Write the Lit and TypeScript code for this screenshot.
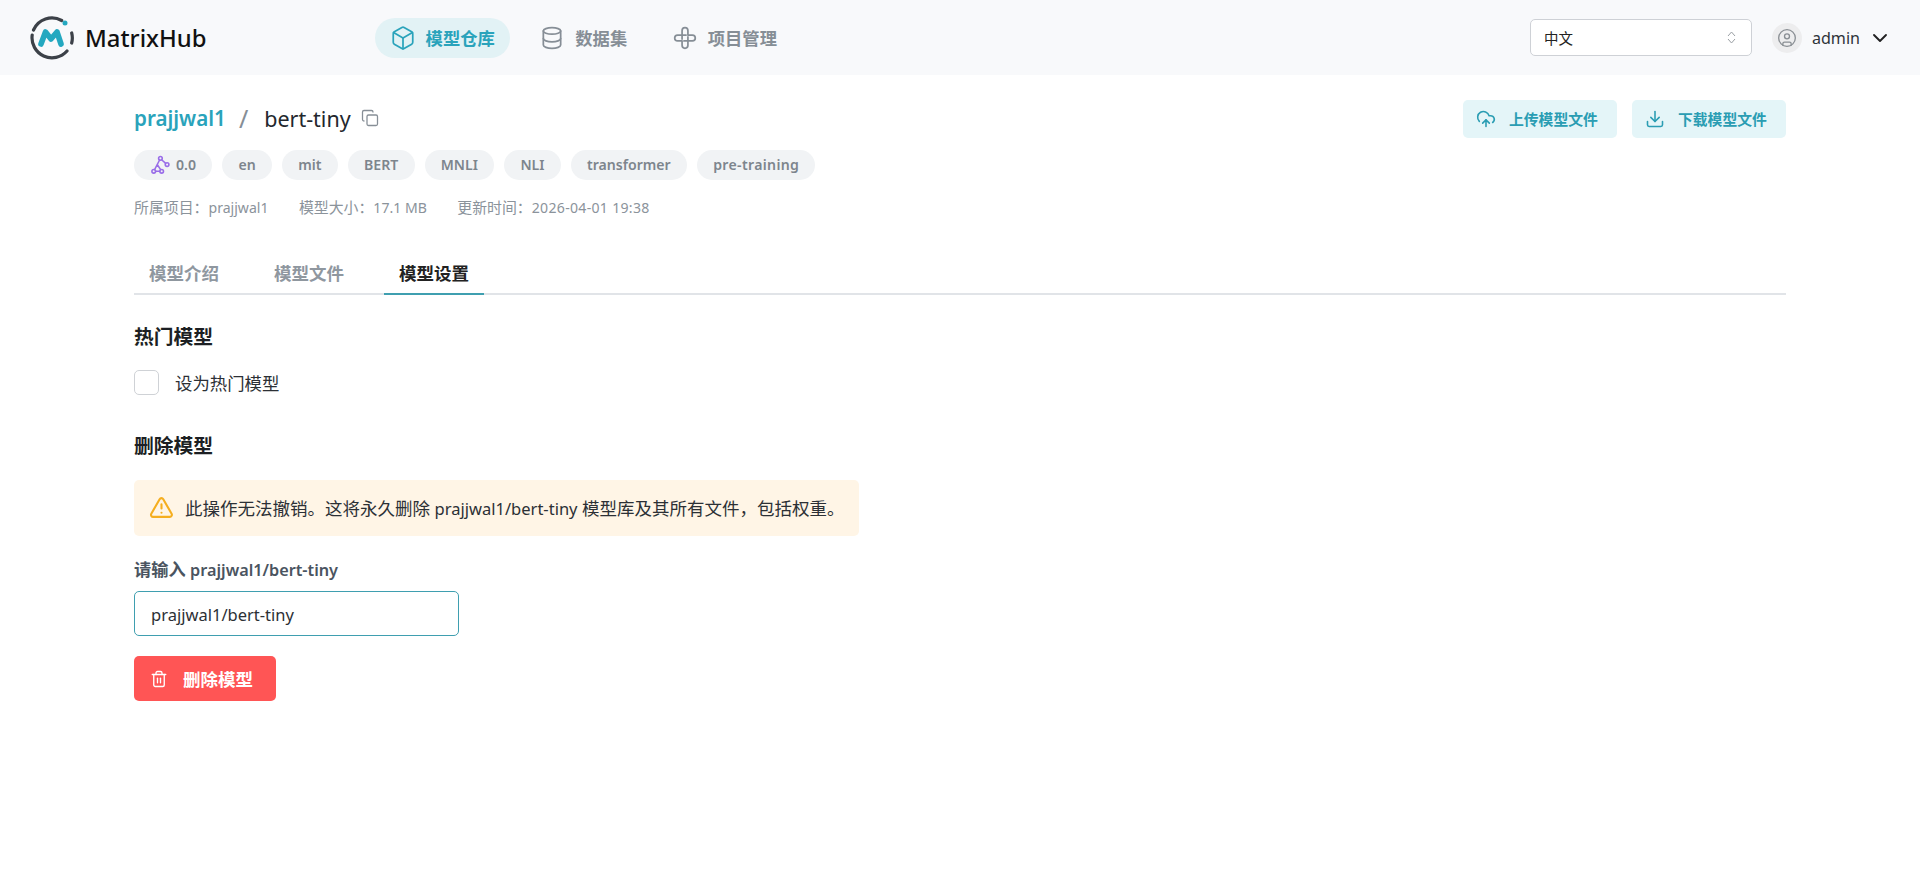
import { LitElement, html, css, svg } from "lit";
import { customElement } from "lit/decorators.js";

const icon = (size: number, body: unknown, sw = 2) => html`<svg width=${size} height=${size} viewBox="0 0 24 24" fill="none" stroke="currentColor" stroke-width=${sw} stroke-linecap="round" stroke-linejoin="round">${body}</svg>`;

const cube = svg`<path d="M21 16V8a2 2 0 0 0-1-1.730l-7-4a2 2 0 0 0-2 0l-7 4A2 2 0 0 0 3 8v8a2 2 0 0 0 1 1.730l7 4a2 2 0 0 0 2 0l7-4A2 2 0 0 0 21 16z"/><path d="M3.300 7 12 12l8.700-5"/><path d="M12 22V12"/>`;
const db = svg`<ellipse cx="12" cy="5.500" rx="8" ry="3"/><path d="M4 5.500v13c0 1.700 3.600 3 8 3s8-1.300 8-3v-13"/><path d="M4 12.500c0 1.700 3.600 3 8 3s8-1.300 8-3"/>`;
const project = svg`<path d="M9.300 13V5.200a2.700 2.700 0 0 1 5.400 0V9.300H18.800a2.700 2.700 0 0 1 0 5.400H11"/><path d="M14.700 11V18.800a2.700 2.700 0 0 1-5.400 0V14.700H5.200a2.700 2.700 0 0 1 0-5.400H13"/>`;
const upload = svg`<path d="M12 13v8"/><path d="M4 14.900A7 7 0 1 1 15.700 8h1.800a4.500 4.500 0 0 1 2.500 8.200"/><path d="m8 17 4-4 4 4"/>`;
const download = svg`<path d="M21 15v4a2 2 0 0 1-2 2H5a2 2 0 0 1-2-2v-4"/><path d="m7 10 5 5 5-5"/><path d="M12 15V3"/>`;
const copy = svg`<rect x="8" y="8" width="14" height="14" rx="2"/><path d="M4 16c-1.100 0-2-.9-2-2V4c0-1.100.9-2 2-2h10c1.100 0 2 .9 2 2"/>`;
const warn = svg`<path d="m21.700 18-8-14a2 2 0 0 0-3.500 0l-8 14A2 2 0 0 0 4 21h16a2 2 0 0 0 1.700-3"/><path d="M12 9v4"/><path d="M12 17h.01"/>`;
const trash = svg`<path d="M3 6h18"/><path d="M19 6v14a2 2 0 0 1-2 2H7a2 2 0 0 1-2-2V6"/><path d="M8 6V4a2 2 0 0 1 2-2h4a2 2 0 0 1 2 2v2"/><path d="M10 11v6"/><path d="M14 11v6"/>`;
const user = svg`<circle cx="12" cy="12" r="10"/><circle cx="12" cy="10" r="3"/><path d="M7 20.700v-1.700a2 2 0 0 1 2-2h6a2 2 0 0 1 2 2v1.700"/>`;
const chev = svg`<path d="m6 9 6 6 6-6"/>`;
const graph = svg`<circle cx="12.500" cy="4" r="2.200"/><circle cx="4.500" cy="19.500" r="2.200"/><circle cx="14" cy="19.500" r="2.200"/><circle cx="20.500" cy="11.500" r="2.200"/><path d="M11.500 6 5.500 17.500M9 12l3.800 5.500M6.700 19.500h5M14.300 6l4.500 4"/>`;

@customElement("app-root")
export class AppRoot extends LitElement {
  static styles = css`
    :host {
      display: block;
      min-height: 879px;
      background: #fff;
      font-family: "Noto Sans", "Noto Sans CJK SC", sans-serif;
      color: #1f2329;
      font-size: 17.5px;
    }
    * { box-sizing: border-box; }
    svg { display: block; flex: none; }
    .la { font-size: 0.945em; }
    .date { letter-spacing: 0.3px; }
    header {
      height: 75px;
      background: #f8f9fb;
      display: flex;
      align-items: center;
      padding: 0 28px 0 30px;
    }
    .brand { display: flex; align-items: center; gap: 11px; width: 345px; }
    .brand b { font-size: 23.800px; font-weight: 500; color: #111; }
    nav { display: flex; gap: 15px; flex: 1; }
    .nav {
      height: 40px;
      display: flex;
      align-items: center;
      gap: 10px;
      padding: 0 15px 0 14.600px;
      border-radius: 20px;
      color: #868e96;
      font-weight: 700;
      font-size: 17.300px;
    }
    .nav.on { background: #e2f2f5; color: #2aa3bb; }
    .select {
      width: 222px;
      height: 37px;
      background: #fff;
      border: 1px solid #ced1d6;
      border-radius: 5px;
      display: flex;
      align-items: center;
      justify-content: space-between;
      padding: 0 15px 0 13px;
      font-size: 14.500px;
      color: #222;
    }
    .updown { display: flex; flex-direction: column; gap: 1px; color: #9a9fa4; }
    .user { display: flex; align-items: center; margin-left: 20px; color: #2f343a; font-size: 16.100px; }
    .avatar {
      width: 30px; height: 30px; border-radius: 50%;
      background: #ededee; color: #8a8f94;
      display: flex; align-items: center; justify-content: center;
      margin-right: 10px;
    }
    .user .caret { margin-left: 8px; color: #222; }
    main { padding: 25px 134px 0; }
    .top { display: flex; justify-content: space-between; align-items: flex-start; }
    .title { display: flex; align-items: center; height: 38px; font-size: 21.500px; padding-bottom: 2px; }
    .title a { color: #2aa3bb; font-weight: 600; font-size: 20.600px; }
    .title i { font-style: normal; color: #868e96; margin: 0 16px 0 13px; font-size: 25px; line-height: 1; }
    .title span { color: #23272d; }
    .title svg { color: #868e96; margin-left: 10px; }
    .acts { display: flex; gap: 15px; }
    .btn {
      height: 38px;
      width: 154px;
      background: #e4f5f8;
      color: #2a9db3;
      border-radius: 5px;
      display: flex;
      align-items: center;
      gap: 13px;
      padding: 0 0 0 13px;
      font-weight: 700;
      font-size: 14.800px;
    }
    .btn span { margin-top: -2px; }
    .tags { display: flex; gap: 10px; margin-top: 12px; }
    .tag {
      height: 30px;
      padding: 0 16.250px 1px;
      border-radius: 15px;
      background: #f1f3f5;
      color: #7d858d;
      font-size: 14.100px;
      font-weight: 600;
      display: flex;
      align-items: center;
      gap: 6px;
    }
    .tag.score { padding-left: 16px; }
    .tag.wide { letter-spacing: 0.33px; }
    .tag svg { color: #9a6ee8; }
    .meta { display: flex; gap: 30.400px; margin-top: 15px; height: 22px; align-items: center; font-size: 14.900px; color: #8b939b; }
    .tabs { display: flex; margin-top: 38px; height: 40px; border-bottom: 2px solid #e1e4e8; }
    .tab {
      width: 100px;
      margin-right: 25px;
      height: 40px;
      padding-top: 5px;
      line-height: 26px;
      text-align: center;
      font-weight: 700;
      color: #8f979f;
      border-bottom: 2px solid transparent;
    }
    .tab.on { color: #222; border-bottom-color: #3f9fb0; }
    h3 { margin: 0; font-size: 19.800px; font-weight: 700; color: #1c1f23; line-height: 28px; }
    .hot { margin-top: 28px; }
    .check { display: flex; align-items: center; gap: 16px; margin-top: 19px; color: #2c3035; font-size: 17.400px; }
    .box { width: 25px; height: 25px; background: #fff; border: 1px solid #cfd2d6; border-radius: 5px; }
    .del { margin-top: 37px; }
    .alert {
      width: 725px;
      height: 56px;
      margin-top: 20px;
      background: #fff5e6;
      border-radius: 5px;
      display: flex;
      align-items: center;
      gap: 11px;
      padding: 0 0 2px 15px;
      color: #2c3035;
    }
    .alert svg { color: #f5ae1f; margin-top: 1px; }
    label { display: block; margin-top: 21px; line-height: 26px; font-weight: 600; color: #4a5460; font-size: 17.200px; }
    .input {
      width: 325px;
      height: 45px;
      margin-top: 8px;
      border: 1.500px solid #3f9fb0;
      border-radius: 5px;
      display: flex;
      align-items: center;
      padding: 2px 0 0 16px;
      color: #2c3035;
    }
    .danger {
      width: 142px;
      height: 45px;
      margin-top: 20px;
      background: #ff5555;
      color: #fff;
      border-radius: 5px;
      display: flex;
      align-items: center;
      gap: 15px;
      padding-left: 16px;
      font-weight: 700;
    }
  `;

  render() {
    const tags = ["en", "mit", "BERT", "MNLI", "NLI", "transformer"];
    return html`
      <header>
        <div class="brand">
          <svg width="44" height="44" viewBox="0 0 44 44" fill="none">
            <g stroke="#3c4148" stroke-width="3.200" stroke-linecap="round">
              <path d="M3.500 14A20 20 0 0 1 31.700 4.500"/>
              <path d="M2.200 19A20 20 0 0 0 37 35"/>
              <path d="M41.700 17A20 20 0 0 1 41.700 27"/>
            </g>
            <path d="M11 28 15.500 16 21 23 27 16 31 28" stroke="#24a8c0" stroke-width="5.600" stroke-linejoin="round" stroke-linecap="round"/>
            <circle cx="35" cy="7" r="2.500" fill="#24a8c0"/>
          </svg>
          <b>MatrixHub</b>
        </div>
        <nav>
          <div class="nav on">${icon(26, cube, 1.600)}模型仓库</div>
          <div class="nav">${icon(26, db, 1.600)}数据集</div>
          <div class="nav">${icon(26, project, 1.600)}项目管理</div>
        </nav>
        <div class="select"><span>中文</span>
          <span class="updown">
            <svg width="9" height="6" viewBox="0 0 9 6" fill="none" stroke="currentColor"><path d="m1 5 3.500-4L8 5"/></svg>
            <svg width="9" height="6" viewBox="0 0 9 6" fill="none" stroke="currentColor"><path d="m1 1 3.500 4L8 1"/></svg>
          </span>
        </div>
        <div class="user">
          <span class="avatar">${icon(20, user, 1.600)}</span>admin
          <span class="caret">${icon(24, chev, 1.900)}</span>
        </div>
      </header>
      <main>
        <div class="top">
          <div class="title">
            <a>prajjwal1</a><i>/</i><span>bert-tiny</span>${icon(18, copy, 1.700)}
          </div>
          <div class="acts">
            <div class="btn">${icon(20, upload, 1.900)}<span>上传模型文件</span></div>
            <div class="btn">${icon(20, download, 1.900)}<span>下载模型文件</span></div>
          </div>
        </div>
        <div class="tags">
          <div class="tag score">${icon(20, graph, 1.900)}0.0</div>
          ${tags.map((t) => html`<div class="tag">${t}</div>`)}
          <div class="tag wide">pre-training</div>
        </div>
        <div class="meta">
          <span>所属项目：<span class="la">prajjwal1</span></span>
          <span>模型大小：<span class="la">17.1 MB</span></span>
          <span>更新时间：<span class="la date">2026-04-01 19:38</span></span>
        </div>
        <div class="tabs">
          <div class="tab">模型介绍</div>
          <div class="tab">模型文件</div>
          <div class="tab on">模型设置</div>
        </div>
        <h3 class="hot">热门模型</h3>
        <div class="check"><span class="box"></span>设为热门模型</div>
        <h3 class="del">删除模型</h3>
        <div class="alert">${icon(25, warn, 2)}<span>此操作无法撤销。这将永久删除 <span class="la">prajjwal1/bert-tiny</span> 模型库及其所有文件，包括权重。</span></div>
        <label>请输入 <span class="la">prajjwal1/bert-tiny</span></label>
        <div class="input"><span class="la">prajjwal1/bert-tiny</span></div>
        <div class="danger">${icon(18, trash, 1.800)}删除模型</div>
      </main>
    `;
  }
}
